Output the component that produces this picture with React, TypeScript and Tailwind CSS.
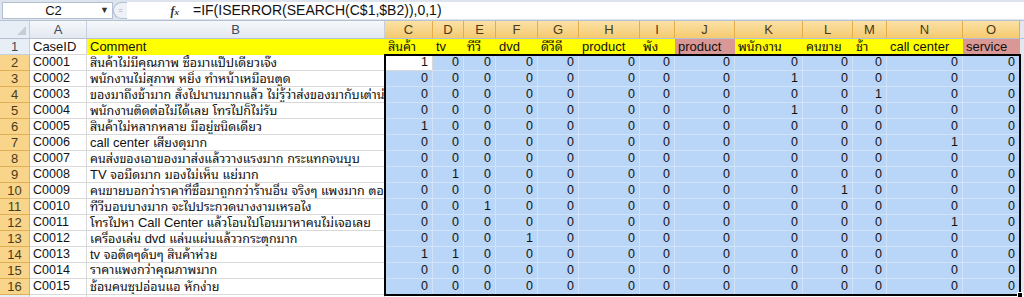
import React from "react";

type Col = { key: string; w: number; label: string; fill: "y" | "p" };

const cols: Col[] = [
  { key: "C", w: 48, label: "สินค้า", fill: "y" },
  { key: "D", w: 31, label: "tv", fill: "y" },
  { key: "E", w: 32, label: "ทีวี", fill: "y" },
  { key: "F", w: 42, label: "dvd", fill: "y" },
  { key: "G", w: 41, label: "ดีวีดี", fill: "y" },
  { key: "H", w: 61, label: "product", fill: "y" },
  { key: "I", w: 35, label: "พัง", fill: "y" },
  { key: "J", w: 60, label: "product", fill: "p" },
  { key: "K", w: 68, label: "พนักงาน", fill: "y" },
  { key: "L", w: 50, label: "คนขาย", fill: "y" },
  { key: "M", w: 34, label: "ช้า", fill: "y" },
  { key: "N", w: 76, label: "call center", fill: "y" },
  { key: "O", w: 57, label: "service", fill: "p" },
];

const rows: { id: string; text: string; ones: string[] }[] = [
  { id: "C0001", text: "สินค้าไม่มีคุณภาพ ซื้อมาแป๊ปเดียวเจ๊ง", ones: ["C"] },
  { id: "C0002", text: "พนักงานไม่สุภาพ หยิ่ง ทำหน้าเหมือนตูด", ones: ["K"] },
  { id: "C0003", text: "ของมาถึงช้ามาก สั่งไปนานมากแล้ว ไม่รู้ว่าส่งของมากับเต่าน่ะ", ones: ["M"] },
  { id: "C0004", text: "พนักงานติดต่อไม่ได้เลย โทรไปก็ไม่รับ", ones: ["K"] },
  { id: "C0005", text: "สินค้าไม่หลากหลาย มีอยู่ชนิดเดียว", ones: ["C"] },
  { id: "C0006", text: "call center เสียงดุมาก", ones: ["N"] },
  { id: "C0007", text: "คนส่งของเอาของมาส่งแล้ววางแรงมาก กระแทกจนบุบ", ones: [] },
  { id: "C0008", text: "TV จอมืดมาก มองไม่เห็น แย่มาก", ones: ["D"] },
  { id: "C0009", text: "คนขายบอกว่าราคาที่ซื้อมาถูกกว่าร้านอื่น จริงๆ แพงมาก ตอแหล", ones: ["L"] },
  { id: "C0010", text: "ทีวีบอบบางมาก จะไปประกวดนางงามเหรอไง", ones: ["E"] },
  { id: "C0011", text: "โทรไปหา Call Center แล้วโอนไปโอนมาหาคนไม่เจอเลย", ones: ["N"] },
  { id: "C0012", text: "เครื่องเล่น dvd แล่นแผ่นแล้ววกระตุกมาก", ones: ["F"] },
  { id: "C0013", text: "tv จอติดๆดับๆ สินค้าห่วย", ones: ["C", "D"] },
  { id: "C0014", text: "ราคาแพงกว่าคุณภาพมาก", ones: [] },
  { id: "C0015", text: "ช้อนคนซุปอ่อนแอ หักง่าย", ones: [] },
];

const FONT = '"Liberation Sans", "Noto Sans Thai Looped", "Noto Sans Thai", sans-serif';

function Mixed({ text }: { text: string }) {
  const parts = text.split(/([\u0E00-\u0E7F]+)/).filter((p) => p.length > 0);
  return (
    <span className="whitespace-pre">
      {parts.map((p, i) =>
        /[\u0E00-\u0E7F]/.test(p) ? (
          <span key={i} className="text-[12.5px]">
            {p}
          </span>
        ) : (
          <span key={i} className="text-[13px]">
            {p}
          </span>
        )
      )}
    </span>
  );
}

function HeaderCell({ w, label, sel }: { w: number; label: string; sel: boolean }) {
  return (
    <div
      style={{ width: w }}
      className={
        "shrink-0 h-full flex items-center justify-center border-r text-[13px] " +
        (sel
          ? "bg-gradient-to-b from-[#fbe2a6] to-[#f5c96e] border-[#e3ad4c] text-[#4a3a1a]"
          : "bg-gradient-to-b from-[#f6f8fb] to-[#e2e8f0] border-[#c5cfdb] text-[#3c4a5a]")
      }
    >
      {label}
    </div>
  );
}

function RowHead({ n, sel }: { n: number; sel: boolean }) {
  return (
    <div
      className={
        "shrink-0 w-[30px] h-full flex items-center justify-center border-r border-b text-[13px] " +
        (sel
          ? "bg-[#f8d58a] border-[#e0ae55] text-[#4a3a1a]"
          : "bg-[#e8eef6] border-[#c5cfdb] text-[#3c4a5a]")
      }
    >
      {n}
    </div>
  );
}

export default function App() {
  return (
    <div
      className="relative w-[1024px] h-[297px] overflow-hidden bg-white text-[12px] text-[#111]"
      style={{ fontFamily: FONT }}
    >
      {/* Formula bar */}
      <div className="h-[21px] flex items-start bg-[#dde4ee] border-b border-[#b6c2d2]">
        <div className="ml-[2px] mt-[2px] w-[111px] h-[17px] bg-white border border-[#b3c0d1] flex items-center">
          <span className="flex-1 text-center pl-[4px] text-[13px]">C2</span>
          <span className="w-[12px] text-[9px] text-[#333]">▼</span>
        </div>
        <div className="mt-[2px] w-[14px] h-[17px] rounded-l-full bg-[#eef2f7] border border-[#b3c0d1] border-r-0 flex items-center justify-center">
          <span className="text-[8px] text-[#a0aab8] leading-none">=</span>
        </div>
        <div className="mt-[2px] w-[60px] h-[17px] bg-white flex items-center justify-end pr-[8px]">
          <span className="italic text-[12px] font-bold text-[#333] font-['Liberation_Serif',serif]">
            f<span className="text-[9px]">x</span>
          </span>
        </div>
        <div className="mt-[2px] flex-1 h-[17px] bg-white flex items-center pl-[6px] text-[14px]">
          =IF(ISERROR(SEARCH(C$1,$B2)),0,1)
        </div>
      </div>

      {/* Column header row */}
      <div className="h-[18px] flex border-b border-[#b6c2d2]">
        <div className="relative shrink-0 w-[30px] h-full bg-[#e8eef6] border-r border-[#c5cfdb]">
          <div className="absolute right-[3px] bottom-[3px] w-0 h-0 border-l-[9px] border-l-transparent border-b-[9px] border-b-[#c6cdd6]" />
        </div>
        <HeaderCell w={57} label="A" sel={false} />
        <HeaderCell w={298} label="B" sel={false} />
        {cols.map((c) => (
          <HeaderCell key={c.key} w={c.w} label={c.key} sel={true} />
        ))}
        <div className="flex-1 bg-[#e2e8f0]" />
      </div>

      {/* Row 1 */}
      <div className="h-[16px] flex">
        <RowHead n={1} sel={false} />
        <div className="shrink-0 w-[57px] h-full border-r border-b border-[#d9d9d9] pl-[3px] flex items-center text-[13px]">
          CaseID
        </div>
        <div className="shrink-0 w-[298px] h-full bg-[#ffff00] pl-[3px] flex items-center text-[13px]">Comment</div>
        {cols.map((c) => (
          <div
            key={c.key}
            style={{ width: c.w }}
            className={
              "shrink-0 h-full pl-[3px] flex items-center whitespace-nowrap overflow-hidden " +
              (c.fill === "y" ? "bg-[#ffff00]" : "bg-[#d99795]")
            }
          >
            <Mixed text={c.label} />
          </div>
        ))}
        <div className="flex-1 bg-[#e2e8f0]" />
      </div>

      {/* Data rows */}
      {rows.map((r, i) => (
        <div key={r.id} className="h-[16px] flex">
          <RowHead n={i + 2} sel={true} />
          <div className="shrink-0 w-[57px] h-full border-r border-b border-[#d9d9d9] pl-[3px] flex items-center text-[12.5px]">
            {r.id}
          </div>
          <div className="shrink-0 w-[298px] h-full border-r border-b border-[#d9d9d9] pl-[3px] flex items-center whitespace-nowrap overflow-hidden">
            <Mixed text={r.text} />
          </div>
          {cols.map((c) => {
            const active = i === 0 && c.key === "C";
            return (
              <div
                key={c.key}
                style={{ width: c.w }}
                className={
                  "shrink-0 h-full border-r border-b pr-[4px] flex items-center justify-end text-[12.5px] " +
                  (active ? "bg-white border-[#d9d9d9]" : "bg-[#b9d5f7] border-[#d3e3f7]")
                }
              >
                {r.ones.includes(c.key) ? 1 : 0}
              </div>
            );
          })}
          <div className="flex-1 bg-[#e2e8f0]" />
        </div>
      ))}

      {/* Row 17 partial */}
      <div className="h-[16px] flex">
        <RowHead n={17} sel={false} />
        <div className="shrink-0 w-[57px] h-full border-r border-[#d9d9d9]" />
        <div className="shrink-0 w-[298px] h-full border-r border-[#d9d9d9]" />
        <div className="flex-1" />
      </div>

      {/* Selection outline over C2:O16 */}
      <div className="absolute left-[384px] top-[54px] w-[637px] h-[242px] border-[2px] border-black pointer-events-none" />
      <div className="absolute left-[1017px] top-[292px] w-[6px] h-[6px] bg-black border border-white pointer-events-none" />
    </div>
  );
}
